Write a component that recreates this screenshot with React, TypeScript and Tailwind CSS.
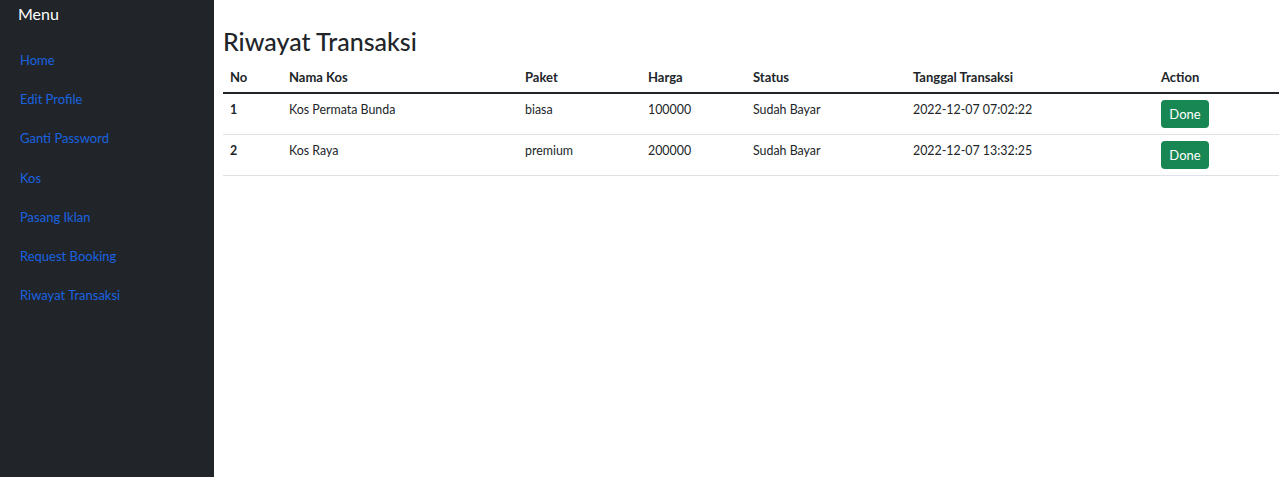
const menu = [
  "Home",
  "Edit Profile",
  "Ganti Password",
  "Kos",
  "Pasang Iklan",
  "Request Booking",
  "Riwayat Transaksi",
];

const rows = [
  { no: 1, nama: "Kos Permata Bunda", paket: "biasa", harga: "100000", status: "Sudah Bayar", tanggal: "2022-12-07 07:02:22" },
  { no: 2, nama: "Kos Raya", paket: "premium", harga: "200000", status: "Sudah Bayar", tanggal: "2022-12-07 13:32:25" },
];

export default function App() {
  return (
    <div className="flex min-h-[477px] font-['Lato',sans-serif] text-[#212529]">
      <aside className="w-[214px] shrink-0 bg-[#212529]">
        <div className="pl-[18px] pt-[3px] text-[16px] leading-[22px] text-white">Menu</div>
        <nav className="mt-[16px] flex flex-col">
          {menu.map((m) => (
            <a key={m} href="#" className="block pl-[20px] py-[10px] text-[13px] leading-[19.2px] text-[#1a63e0]">
              {m}
            </a>
          ))}
        </nav>
      </aside>

      <main className="flex-1 pl-[9px] pr-[1px] pt-[26px]">
        <h2 className="mb-[5px] text-[25px] font-medium leading-[30px]">Riwayat Transaksi</h2>
        <table className="w-full table-fixed border-collapse text-[12.4px] leading-[19.2px]">
          <colgroup>
            <col className="w-[59px]" />
            <col className="w-[236px]" />
            <col className="w-[123px]" />
            <col className="w-[105px]" />
            <col className="w-[160px]" />
            <col className="w-[248px]" />
            <col />
          </colgroup>
          <thead>
            <tr className="border-b-2 border-[#212529] text-left text-[13px]">
              {["No", "Nama Kos", "Paket", "Harga", "Status", "Tanggal Transaksi", "Action"].map((h) => (
                <th key={h} className="px-[7px] pt-[6.5px] pb-[5.5px] font-bold">
                  {h}
                </th>
              ))}
            </tr>
          </thead>
          <tbody>
            {rows.map((r) => (
              <tr key={r.no} className="border-b border-[#dee2e6] align-top">
                <td className="px-[7px] pt-[6px] pb-[6px] font-bold">{r.no}</td>
                <td className="px-[7px] pt-[6px] pb-[6px]">{r.nama}</td>
                <td className="px-[7px] pt-[6px] pb-[6px]">{r.paket}</td>
                <td className="px-[7px] pt-[6px] pb-[6px]">{r.harga}</td>
                <td className="px-[7px] pt-[6px] pb-[6px]">{r.status}</td>
                <td className="px-[7px] pt-[6px] pb-[6px]">{r.tanggal}</td>
                <td className="px-[7px] pt-[6px] pb-[6px]">
                  <button className="block h-[28px] w-[48px] rounded-[4px] bg-[#198754] text-[13px] text-white">
                    Done
                  </button>
                </td>
              </tr>
            ))}
          </tbody>
        </table>
      </main>
    </div>
  );
}
